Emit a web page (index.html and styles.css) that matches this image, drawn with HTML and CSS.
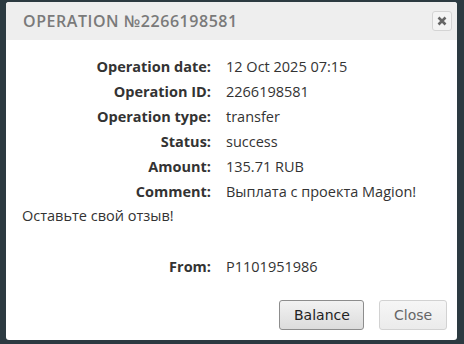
FILE: index.html
```html
<!DOCTYPE html>
<html lang="en">
<head>
  <meta charset="UTF-8" />
  <meta name="viewport" content="width=device-width, initial-scale=1.0"/>
  <title>Operation</title>
  <link rel="stylesheet" href="styles.css">
</head>
<body>
  <div class="dialog">
    <div class="dialog-header">
      <span class="dialog-title">OPERATION №2266198581</span>
      <button class="close-x" title="Close">
        <svg width="10" height="10" viewBox="0 0 10 10">
          <path d="M1.5 1.5 L8.5 8.5 M8.5 1.5 L1.5 8.5" stroke="#666" stroke-width="2.6" stroke-linecap="butt"/>
        </svg>
      </button>
    </div>
    <div class="dialog-body">
      <div class="info">
        <div class="label">Operation date:</div><div class="value">12 Oct 2025 07:15</div>
        <div class="label">Operation ID:</div><div class="value">2266198581</div>
        <div class="label">Operation type:</div><div class="value">transfer</div>
        <div class="label">Status:</div><div class="value">success</div>
        <div class="label">Amount:</div><div class="value">135.71 RUB</div>
        <div class="label">Comment:</div><div class="value">Выплата с проекта Magion!</div>
      </div>
      <div class="feedback">Оставьте свой отзыв!</div>
      <div class="info from">
        <div class="label">From:</div><div class="value">P1101951986</div>
      </div>
    </div>
    <div class="dialog-footer">
      <button class="btn btn-balance">Balance</button>
      <button class="btn btn-close">Close</button>
    </div>
  </div>
</body>
</html>
```
FILE: styles.css
```css
body {
  margin: 0;
  background: #2c3a41;
  height: 344px;
  overflow: hidden;
  font-family: "Open Sans", Arial, sans-serif;
  color: #333;
}

.dialog {
  margin: 2px 7px 0 6px;
  height: 338px;
  background: #fff;
  border-radius: 3px;
  display: flex;
  flex-direction: column;
}

.dialog-header {
  height: 38px;
  background: #eeeeee;
  border-radius: 3px 3px 0 0;
  display: flex;
  align-items: center;
  justify-content: space-between;
  padding: 0 5px 0 17px;
}

.dialog-title {
  font-size: 16px;
  font-weight: 600;
  letter-spacing: 0.55px;
  color: #7a7a7a;
}

.close-x {
  width: 20px;
  height: 20px;
  padding: 0;
  border: 1px solid #d4d4d4;
  border-radius: 3px;
  background: #f4f4f4;
  display: flex;
  align-items: center;
  justify-content: center;
}

.dialog-body {
  flex: 1;
  padding: 17px 0 0 16px;
  font-size: 14.5px;
}

.info {
  display: grid;
  grid-template-columns: 189px auto;
  column-gap: 15px;
  row-gap: 6px;
  line-height: 19px;
}

.label {
  text-align: right;
  font-weight: 700;
  color: #333;
}

.value {
  color: #333;
}

.feedback {
  margin-top: 5px;
  line-height: 19px;
}

.from {
  margin-top: 32px;
}

.dialog-footer {
  display: flex;
  justify-content: flex-end;
  gap: 15px;
  padding: 0 10px 10px 0;
}

.btn {
  font-family: "DejaVu Sans", Verdana, sans-serif;
  font-size: 14px;
  height: 30px;
  border-radius: 3px;
  padding: 0 14px;
}

.btn-balance {
  width: 85px;
  border: 1px solid #8d8d8d;
  background: linear-gradient(#f2f2f2, #dcdcdc);
  color: #222;
}

.btn-close {
  width: 68px;
  border: 1px solid #d2d2d2;
  background: linear-gradient(#f6f6f6, #ebebeb);
  color: #666;
}
```
